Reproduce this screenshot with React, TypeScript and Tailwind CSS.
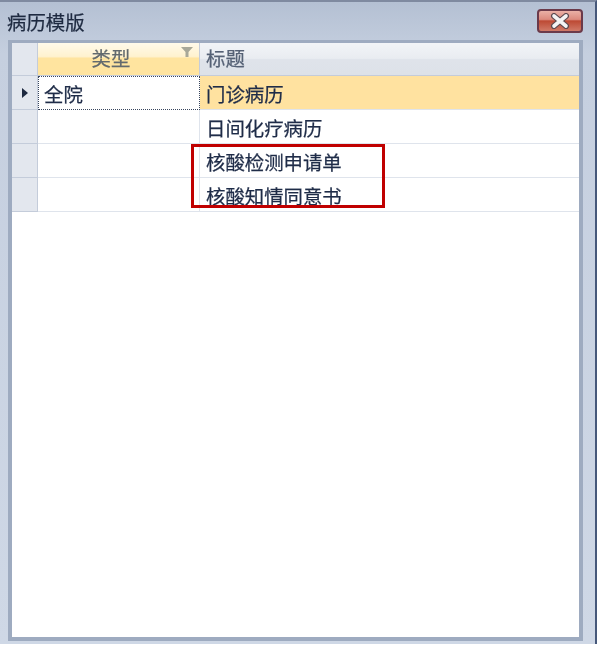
import { Fragment } from "react";

const rows = [
  { type: "全院", title: "门诊病历", active: true },
  { type: "", title: "日间化疗病历", active: false },
  { type: "", title: "核酸检测申请单", active: false },
  { type: "", title: "核酸知情同意书", active: false },
];

export default function App() {
  return (
    <div
      className="relative h-[646px] w-[600px] overflow-hidden bg-white text-[19.4px] leading-none text-[#1f2c48] [-webkit-text-stroke:0.25px]"
      style={{ fontFamily: '"Liberation Sans", "Noto Sans CJK SC", sans-serif' }}
    >
      <div className="h-[644px] w-[597px] border-t-2 border-r-2 border-t-[#7f8aa0] border-r-[#46587a] bg-[linear-gradient(180deg,#b4c0d3_0%,#c5cfdf_8%,#cfd8e6_100%)]">
        <div className="flex h-[38px] items-start justify-between pl-[7px] pr-[12px]">
          <span className="mt-[12px] text-[#1e2a40] blur-[0.4px]">病历模版</span>
          <button className="mt-[7px] flex h-[24px] w-[46px] items-center justify-center rounded-[4px] border-2 border-[#6b3a4a] bg-[linear-gradient(180deg,#eab0a6_0%,#dc8a7e_42%,#bd4a34_50%,#d07a68_100%)]">
            <svg width="20" height="16" viewBox="0 0 20 16">
              <path d="M4 3 L16 13 M16 3 L4 13" stroke="#5c4a50" strokeWidth="6" strokeLinecap="round" />
              <path d="M4 3 L16 13 M16 3 L4 13" stroke="#f4f4f4" strokeWidth="3.6" strokeLinecap="round" />
            </svg>
          </button>
        </div>
        <div className="ml-[8px] h-[601px] w-[575px] border-[4px] border-t-[3px] border-[#9eabc0] bg-white">
          <div className="grid grid-cols-[26px_162px_1fr] grid-rows-[33px_34px_34px_34px_34px]">
            <div className="border-r border-b border-[#c4ccda] bg-[#e3e7ee]" />
            <div className="relative flex items-center justify-center border-r border-b border-[#c4ccda] bg-[linear-gradient(180deg,#fffaea_0%,#fff2cf_42%,#ffe49f_48%,#ffe49f_100%)] pr-[15px] pt-[1px] text-[#636a6e] blur-[0.4px]">
              类型
              <svg className="absolute top-[4px] right-[6px]" width="12" height="11" viewBox="0 0 12 11">
                <path d="M0 0h12L7.5 5v5h-3V5z" fill="#a8a898" />
              </svg>
            </div>
            <div className="flex items-center border-b border-[#c4ccda] bg-[linear-gradient(180deg,#f2f4f7_0%,#e9ecf1_48%,#dfe3ea_52%,#dde2e9_100%)] pl-[6px] pt-[1px] text-[#566276] blur-[0.4px]">
              标题
            </div>
            {rows.map((row) => (
              <Fragment key={row.title}>
                <div className="flex items-center justify-center border-r border-b border-[#c4ccda] bg-[#e3e7ee]">
                  {row.active && <span className="h-0 w-0 border-y-[5px] border-l-[6px] border-y-transparent border-l-[#1e2a40]" />}
                </div>
                {row.active ? (
                  <div className="flex items-center border border-dotted border-[#39465e] pl-[5px] pt-[6px] blur-[0.4px]">{row.type}</div>
                ) : (
                  <div className="border-r border-b border-[#dfe4ec]" />
                )}
                <div className={`flex items-center border-b border-[#dfe4ec] pl-[6px] pt-[6px] blur-[0.4px] ${row.active ? "bg-[#ffe2a0]" : ""}`}>
                  {row.title}
                </div>
              </Fragment>
            ))}
          </div>
        </div>
      </div>
      <div className="absolute top-[144px] left-[191px] h-[64px] w-[194px] border-[3px] border-[#c00000]" />
    </div>
  );
}
